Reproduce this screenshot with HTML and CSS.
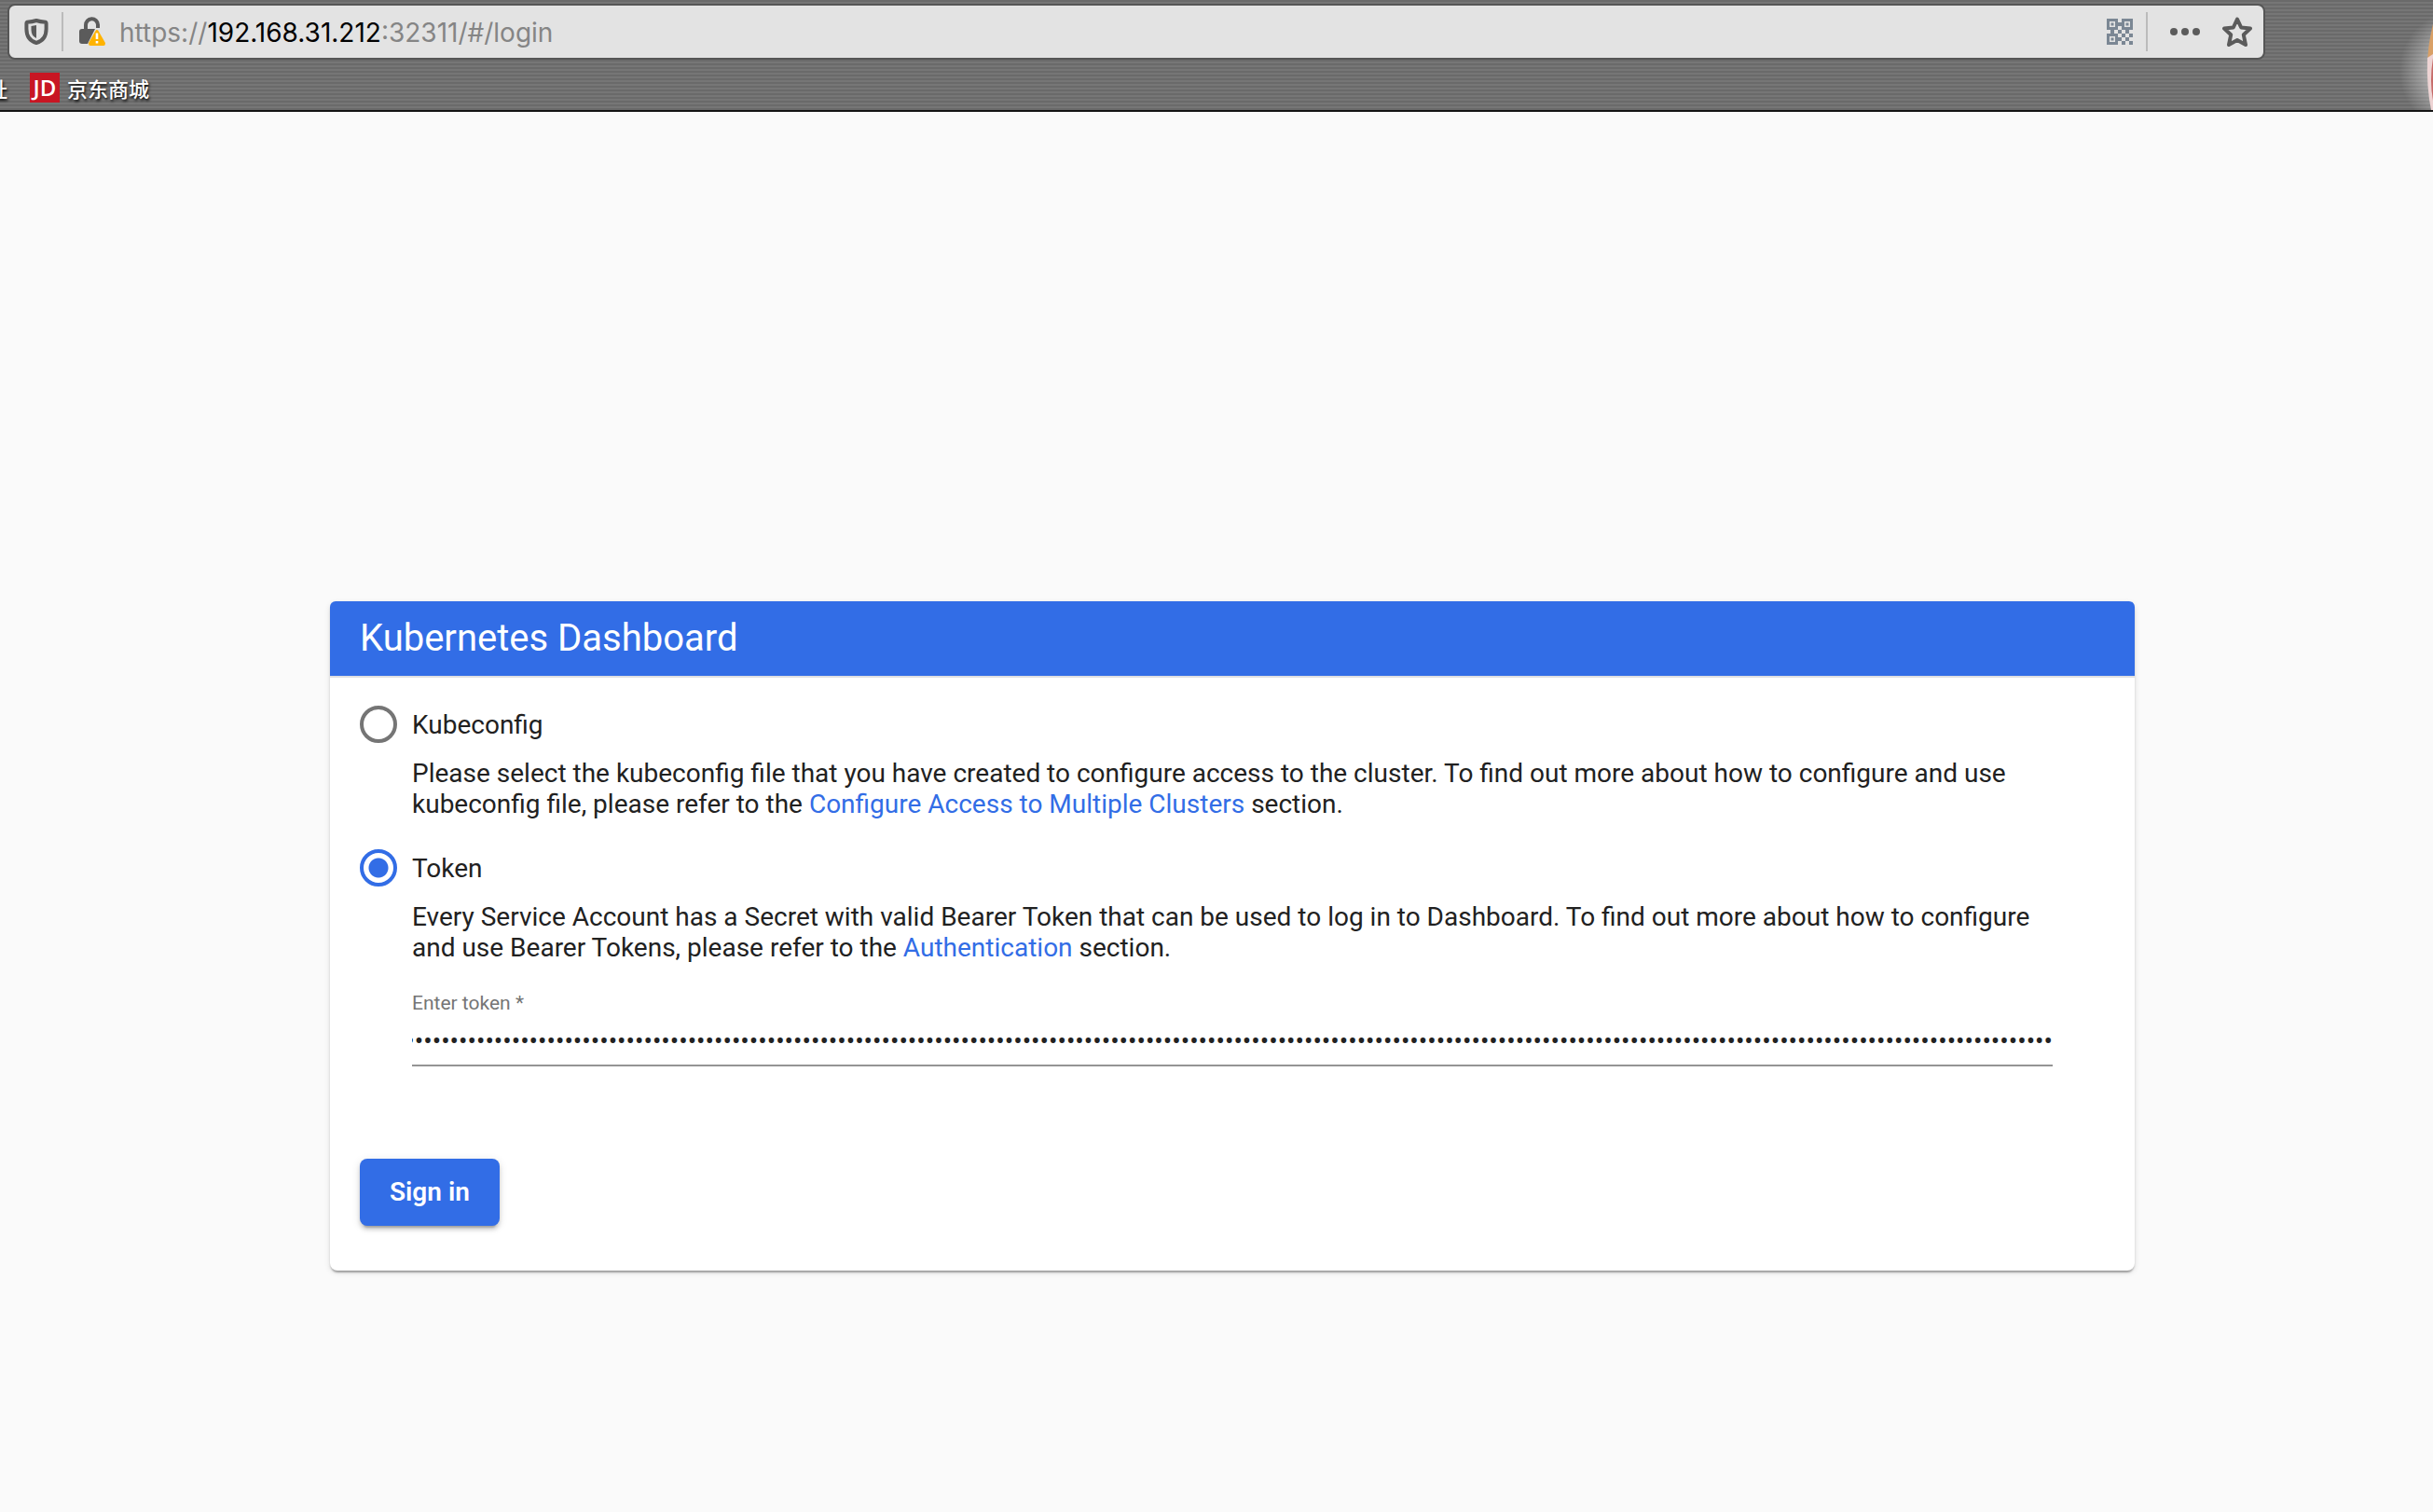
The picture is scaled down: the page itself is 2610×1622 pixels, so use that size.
FILE: index.html
```html
<!DOCTYPE html>
<html lang="en">
<head>
<meta charset="utf-8">
<title>Kubernetes Dashboard</title>
<link rel="stylesheet" href="styles.css">
</head>
<body>
<header class="browser">
  <div class="address-bar">
    <button class="tool shield" type="button" aria-label="Tracking protection">
      <svg width="26" height="30" viewBox="0 0 26 30"><path d="M13 3C10 4 6.500 4.500 3 4.700C2.500 5 2.400 5.500 2.400 6V12C2.400 20 6 25 13 27C20 25 23.600 20 23.600 12V6C23.600 5.500 23.500 5 23 4.700C19.500 4.500 16 4 13 3Z" fill="none" stroke="#5b5b5b" stroke-width="4" stroke-linejoin="round"/><path d="M13 8L7.500 9V13C7.500 17.500 9.500 20.500 13 22Z" fill="#5b5b5b"/></svg>
    </button>
    <span class="divider"></span>
    <button class="tool lock" type="button" aria-label="Connection is not secure">
      <svg width="30" height="32" viewBox="0 0 30 32"><path d="M8 14V9A6.500 6.500 0 0 1 21 8.500V12" fill="none" stroke="#5b5b5b" stroke-width="4"/><path d="M4 13H18L10 29H4Q1 29 1 26V16Q1 13 4 13Z" fill="#5b5b5b"/><path d="M20 15.500L27.500 28.500Q27.500 29.500 27 29.500H13Q12.500 29.500 12.500 28.500Z" fill="#ffb300" stroke="#ffb300" stroke-width="3" stroke-linejoin="round"/><path d="M20 17.500V24M20 26V28.500" stroke="#fff" stroke-width="2.600"/></svg>
    </button>
    <div class="url"><span>https://</span><span class="host">192.168.31.212</span><span>:32311/#/login</span></div>
    <button class="tool qr" type="button" aria-label="QR code">
      <svg width="28" height="28" viewBox="0 0 28 28" fill="#7b8794"><path fill-rule="evenodd" d="M0 0H12V12H0ZM3 3V9H9V3ZM16 0H28V12H16ZM19 3V9H25V3ZM0 16H12V28H0ZM3 19V25H9V19Z"/><path d="M4.500 4.500h3v3h-3zM20.500 4.500h3v3h-3zM4.500 20.500h3v3h-3zM12 4h4v4h-4zM4 12h4v4H4zM12 12h4v4h-4zM20 12h4v4h-4zM16 16h4v4h-4zM24 16h4v4h-4zM12 20h4v4h-4zM20 20h4v4h-4zM16 24h4v4h-4zM24 24h4v4h-4z"/></svg>
    </button>
    <span class="divider"></span>
    <button class="tool more" type="button" aria-label="Page actions">
      <svg width="32" height="8" viewBox="0 0 32 8" fill="#5b5b5b"><circle cx="4" cy="4" r="4"/><circle cx="16" cy="4" r="4"/><circle cx="28" cy="4" r="4"/></svg>
    </button>
    <button class="tool star" type="button" aria-label="Bookmark this page">
      <svg width="32" height="32" viewBox="0 0 32 32"><path d="M16 2.500L20.200 11.500L30 12.500L22.800 19.300L25 30L16 25L7 30L9.200 19.300L2 12.500L11.800 11.500Z" fill="none" stroke="#5b5b5b" stroke-width="4" stroke-linejoin="round"/></svg>
    </button>
  </div>
  <nav class="bookmarks">
    <a class="bookmark clipped" href="#">址</a>
    <a class="bookmark" href="#"><span class="jd">JD</span>京东商城</a>
  </nav>
  <svg class="persona" width="50" height="118" viewBox="0 0 50 118"><defs><radialGradient id="glow" gradientUnits="userSpaceOnUse" cx="80" cy="76" r="66"><stop offset=".4" stop-color="#fff" stop-opacity=".5"/><stop offset="1" stop-color="#fff" stop-opacity="0"/></radialGradient></defs><path d="M0 0H50V118H0Z" fill="url(#glow)"/><path d="M50 26Q44 50 44 72H50Z" fill="#d9a066"/><path d="M44 62Q43 94 48 118H50V58Z" fill="#eed4d4"/><path d="M50 62Q46 86 50 108Z" fill="#c66a68"/></svg>
</header>
<main class="page">
  <form class="card">
    <h1 class="card-title">Kubernetes Dashboard</h1>
    <div class="card-body">
      <div class="option">
        <input class="radio" type="radio" name="mode" id="kubeconfig">
        <label for="kubeconfig">Kubeconfig</label>
      </div>
      <p class="hint">Please select the kubeconfig file that you have created to configure access to the cluster. To find out more about how to configure and use kubeconfig file, please refer to the <a href="#">Configure Access to Multiple Clusters</a> section.</p>
      <div class="option">
        <input class="radio" type="radio" name="mode" id="token-mode" checked>
        <label for="token-mode">Token</label>
      </div>
      <p class="hint">Every Service Account has a Secret with valid Bearer Token that can be used to log in to Dashboard. To find out more about how to configure and use Bearer Tokens, please refer to the <a href="#">Authentication</a> section.</p>
      <div class="field">
        <label for="token">Enter token *</label>
        <input class="token" type="password" id="token" value="00000000000000000000000000000000000000000000000000000000000000000000000000000000000000000000000000000000000000000000000000000000000000000000000000000000000000000000000000000000000000000000000000000000000000000000">
      </div>
      <button class="sign-in" type="submit">Sign in</button>
    </div>
  </form>
</main>
</body>
</html>
```
FILE: styles.css
```css
* { box-sizing: border-box; }
body {
  margin: 0;
  min-height: 100vh;
  display: flex;
  flex-direction: column;
  background: #fafafa;
  color: #212121;
  font: 28px/33px Roboto, sans-serif;
}
button { font: inherit; border: 0; padding: 0; background: none; }

/* browser toolbar */
.browser {
  position: relative;
  height: 120px;
  padding: 4px 180px 0 8px;
  border-bottom: 2px solid #141414;
  background: repeating-linear-gradient(#6a6a6a 0 2px, #767676 2px 4px);
}
.address-bar {
  height: 60px;
  display: flex;
  align-items: center;
  border: 2px solid #565656;
  border-radius: 8px;
  background: #e3e3e3;
  padding: 0 12px 0 16px;
}
.tool { display: flex; flex: none; }
.divider { flex: none; width: 2px; height: 42px; background: #bbb; }
.shield { margin-right: 14px; }
.lock { margin: 0 14px 0 16px; }
.url { flex: 1; padding-top: 2px; color: #858585; font: 28px/34px Inter, sans-serif; }
.host { color: #000; }
.qr { margin-right: 14px; }
.more { margin: 0 24px; }
.bookmarks {
  display: flex;
  align-items: center;
  gap: 24px;
  height: 54px;
  padding-top: 6px;
}
.bookmark {
  display: flex;
  align-items: center;
  gap: 8px;
  color: #fff;
  font: 500 22px/30px "Noto Sans CJK SC", sans-serif;
  text-decoration: none;
  text-shadow: 1px 2px 3px #000;
}
.clipped { margin-left: -22px; }
.jd {
  width: 32px;
  height: 32px;
  background: #c81623;
  text-align: center;
  font: 600 24px/32px "Open Sans", sans-serif;
  text-shadow: none;
}
.persona { position: absolute; top: 0; right: 0; }

/* login page */
.page { padding: 525px 320px 64px 354px; }
.card {
  border-radius: 8px;
  background: #fff;
  box-shadow: 0 4px 2px -2px rgba(0,0,0,.2), 0 2px 2px rgba(0,0,0,.14), 0 2px 6px rgba(0,0,0,.12);
}
.card-title {
  margin: 0;
  padding: 0 32px;
  border-bottom: 2px solid #dedfe2;
  border-radius: 6px 6px 0 0;
  background: #326de6;
  background-clip: padding-box;
  color: #fff;
  font-size: 40px;
  font-weight: 400;
  line-height: 80px;
}
.card-body { padding: 30px 32px 48px; }
.option { display: flex; align-items: center; gap: 16px; height: 40px; }
.radio {
  appearance: none;
  width: 40px;
  height: 40px;
  margin: 0;
  border: 4px solid #757575;
  border-radius: 50%;
}
.radio:checked {
  border-color: #326de6;
  background: radial-gradient(circle, #326de6 10px, #fff 11px);
}
.hint { margin: 16px 48px 32px 56px; }
.hint a { color: #326de6; font-weight: 450; text-decoration: none; }
.field { margin: 32px 56px 0; display: flex; flex-direction: column; gap: 8px; }
.field label { color: #757575; font-size: 21px; line-height: 22px; }
.token {
  width: 100%;
  height: 49px;
  padding: 5px 0 10px;
  border: 0;
  border-bottom: 2px solid #949494;
  background: none;
  color: #212121;
  font: 28px/32px Roboto, sans-serif;
  direction: rtl;
}
.sign-in {
  display: block;
  margin-top: 99px;
  padding: 0 32px;
  border-radius: 8px;
  background: #326de6;
  color: #fff;
  font-weight: 600;
  line-height: 72px;
  box-shadow: 0 6px 2px -4px rgba(0,0,0,.2), 0 4px 4px rgba(0,0,0,.14), 0 2px 10px rgba(0,0,0,.12);
}
```
